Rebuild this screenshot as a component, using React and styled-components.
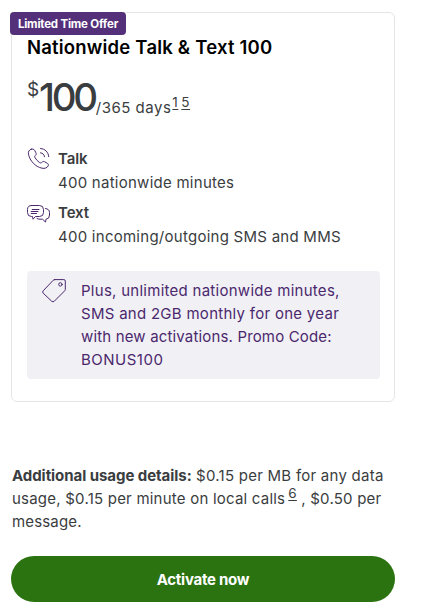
import React from 'react';
import styled, { createGlobalStyle } from 'styled-components';

const Palette = {
    text: '#3a3d40',
    purple: '#4b286d',
    badge: '#54307a',
    green: '#2b7310',
    lilac: '#f1f0f5',
    border: '#e3e6e8'
};

const GlobalStyle = createGlobalStyle`
    * {
        box-sizing: border-box;
    }

    body {
        margin: 0;
        background: #fff;
        color: ${Palette.text};
        font-family: Inter, "Liberation Sans", sans-serif;
        font-size: 15px;
        line-height: 23px;
    }
`;

const StyledPage = styled.main`
    width: 422px;
    height: 616px;
    padding: 12px 27px 0 11px;
    overflow: hidden;
`;

const StyledCard = styled.section`
    position: relative;
    height: 390px;
    padding: 22px 14px 0 15px;
    border: 1px solid ${Palette.border};
    border-radius: 6px;
`;

const StyledBadge = styled.div`
    position: absolute;
    top: -1px;
    left: -2px;
    width: 116px;
    height: 23px;
    border-radius: 4px;
    background: ${Palette.badge};
    color: #fff;
    font-size: 11.5px;
    font-weight: 700;
    letter-spacing: -0.2px;
    line-height: 24px;
    text-align: center;
    white-space: nowrap;
`;

const StyledTitle = styled.h2`
    margin: 0;
    color: #000;
    font-size: 18.5px;
    font-weight: 600;
    letter-spacing: 0.2px;
    line-height: 24px;
    white-space: nowrap;
`;

const StyledPrice = styled.div`
    display: flex;
    align-items: flex-start;
    height: 50px;
    margin-top: 17px;
`;

const StyledCurrency = styled.span`
    width: 12px;
    font-size: 19px;
    line-height: 28px;
`;

const StyledAmount = styled.span`
    font-size: 38.5px;
    font-weight: 500;
    letter-spacing: -3.3px;
    line-height: 43px;
    margin-right: 1px;
`;

const StyledTerm = styled.span`
    padding-top: 20px;
    letter-spacing: 0.5px;
`;

const StyledNote = styled.a`
    position: relative;
    top: -6px;
    margin-left: ${props => props.$gap || 0}px;
    font-size: 13.5px;
    line-height: 0;
    text-decoration: underline;
    text-decoration-skip-ink: none;
    text-underline-offset: 2px;
`;

const StyledFeatures = styled.div`
    display: flex;
    flex-direction: column;
    gap: 6px;
    margin-top: 21px;
`;

const StyledFeature = styled.div`
    display: flex;
    gap: 7px;
    height: 48px;
    line-height: 24px;
    letter-spacing: 0.26px;

    svg {
        flex: none;
    }

    strong {
        display: block;
        font-weight: 600;
        letter-spacing: -0.1px;
    }
`;

const StyledPromo = styled.div`
    display: flex;
    gap: 15px;
    height: 108px;
    margin-top: 22px;
    padding: 8px 14px 8px 15px;
    border-radius: 4px;
    background: ${Palette.lilac};
    color: ${Palette.purple};

    svg {
        flex: none;
    }
`;

const StyledLine = styled.div`
    letter-spacing: ${props => props.$tracking || 0.25}px;
    white-space: nowrap;
`;

const StyledDetails = styled.div`
    margin-top: 62px;
    padding-left: 1px;

    strong {
        font-weight: 700;
        letter-spacing: -0.05px;
    }
`;

const StyledButton = styled.button`
    display: block;
    width: 384px;
    height: 46px;
    margin-top: 23px;
    padding: 0;
    border: 0;
    border-radius: 23px;
    background: ${Palette.green};
    color: #fff;
    font: inherit;
    font-weight: 700;
    letter-spacing: -0.25px;
`;

const iconProps = {
    width: 24,
    height: 24,
    viewBox: '0 0 24 24',
    fill: 'none',
    stroke: Palette.purple,
    strokeWidth: 1,
    strokeLinecap: 'round',
    strokeLinejoin: 'round'
};

const PhoneIcon = () => (
    <svg {...iconProps}>
        <path d="M4.2 2.2C2.2 2.8 1 4.6 1.5 7.2C2.8 13.8 8.3 19.8 15 21.2C17.8 21.8 20.2 20.9 21.2 18.8C21.7 17.7 21.3 16.9 20.3 16.3L17.7 14.8C16.5 14.1 15.6 14.5 14.8 15.4C13.9 16.3 13.1 16 12.1 15.2C10.5 14 9.1 12.5 8.1 10.8C7.4 9.7 7.6 9 8.5 8.3C9.3 7.6 9.4 6.8 8.9 5.8L7.6 3.3C7 2.1 5.6 1.8 4.2 2.2Z" />
        <path d="M13.5 1.5C18.1 1.8 21.4 5.1 21.7 9.6M13.5 5.8C15.8 6.1 17.2 7.5 17.5 9.7" />
    </svg>
);

const ChatIcon = () => (
    <svg {...iconProps}>
        <path d="M4.5 4.5H12.5Q16.5 4.5 16.5 8.5V11.5Q16.5 15.5 12.5 15.5H8.5L6 18.2L5.5 15.5H4.5Q.5 15.5 .5 11.5V8.5Q.5 4.5 4.5 4.5Z" />
        <path d="M18.5 7.5Q22.5 8 22.5 11.5V14Q22.5 18 19 18.2L18.5 21L15.5 18.2H13Q11.2 18.2 10 17.5M5.2 8.5H12M4.2 10.5H11M4.2 12.5H9.5" />
    </svg>
);

const TagIcon = () => (
    <svg {...iconProps}>
        <path d="M12.7 .6H21.8Q23.3 .6 23.3 2.1V10.4Q23.3 11.2 22.7 11.8L12.2 22.3Q11 23.4 9.8 22.3L1.2 14.2Q.1 13 1.2 11.8L11.2 1.3Q11.8 .6 12.7 .6Z" />
        <circle cx="18.4" cy="5.4" r="1.7" />
    </svg>
);

const Feature = ({ icon, name, children }) => (
    <StyledFeature>
        {icon}
        <div>
            <strong>{name}</strong>
            {children}
        </div>
    </StyledFeature>
);

const App = () => {
    return (
        <>
            <GlobalStyle />
            <StyledPage>
                <StyledCard>
                    <StyledBadge>Limited Time Offer</StyledBadge>
                    <StyledTitle>Nationwide Talk &amp; Text 100</StyledTitle>
                    <StyledPrice>
                        <StyledCurrency>$</StyledCurrency>
                        <StyledAmount>100</StyledAmount>
                        <StyledTerm>
                            /365 days
                            <StyledNote $gap={1}>1</StyledNote>
                            <StyledNote $gap={3}>5</StyledNote>
                        </StyledTerm>
                    </StyledPrice>
                    <StyledFeatures>
                        <Feature icon={<PhoneIcon />} name="Talk">400 nationwide minutes</Feature>
                        <Feature icon={<ChatIcon />} name="Text">400 incoming/outgoing SMS and MMS</Feature>
                    </StyledFeatures>
                    <StyledPromo>
                        <TagIcon />
                        <div>
                            <StyledLine $tracking={0.27}>Plus, unlimited nationwide minutes,</StyledLine>
                            <StyledLine $tracking={0.28}>SMS and 2GB monthly for one year</StyledLine>
                            <StyledLine $tracking={0.16}>with new activations. Promo Code:</StyledLine>
                            <StyledLine $tracking={0.5}>BONUS100</StyledLine>
                        </div>
                    </StyledPromo>
                </StyledCard>
                <StyledDetails>
                    <StyledLine><strong>Additional usage details:</strong> $0.15 per MB for any data</StyledLine>
                    <StyledLine $tracking={0.22}>
                        usage, $0.15 per minute on local calls<StyledNote $gap={3}>6</StyledNote> , $0.50 per
                    </StyledLine>
                    <StyledLine $tracking={0.15}>message.</StyledLine>
                </StyledDetails>
                <StyledButton>Activate now</StyledButton>
            </StyledPage>
        </>
    );
};

export default App;
